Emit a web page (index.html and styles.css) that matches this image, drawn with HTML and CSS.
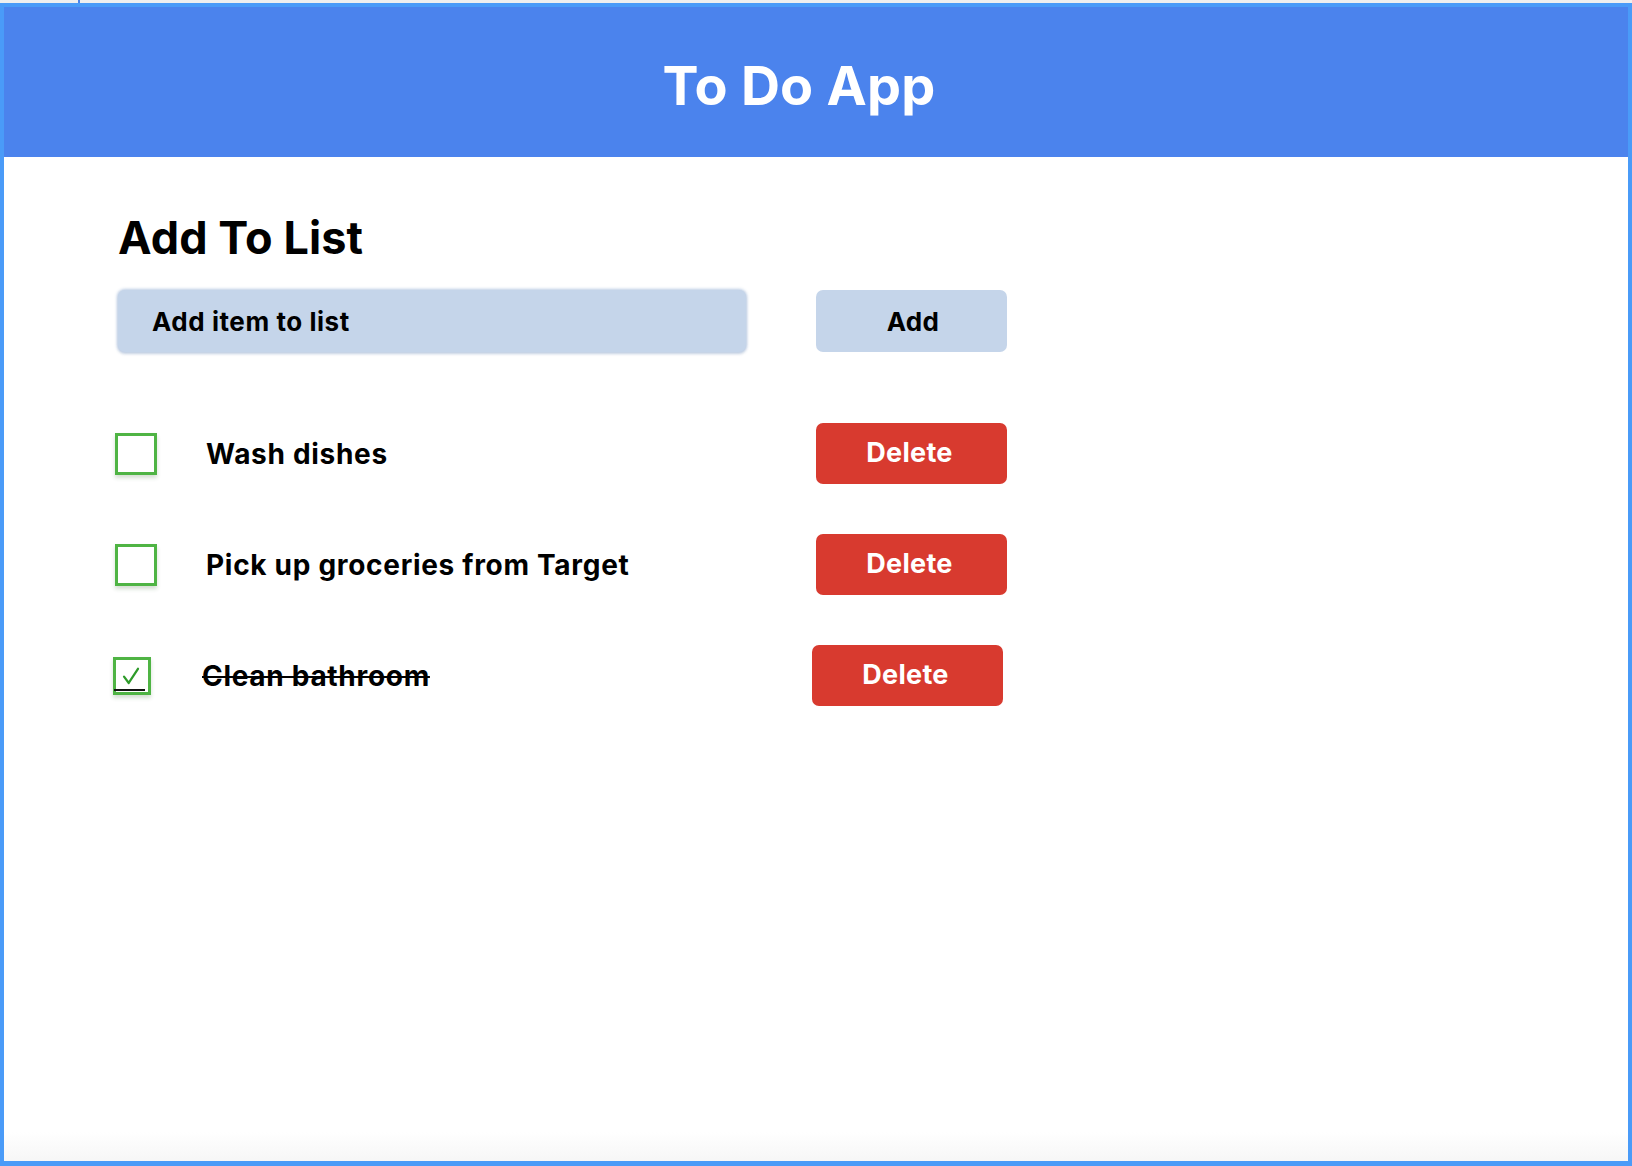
FILE: index.html
```html
<!DOCTYPE html>
<html lang="en">
<head>
<meta charset="utf-8">
<title>To Do App</title>
<link rel="stylesheet" href="styles.css">
</head>
<body>
<div class="topstrip"><span class="topmark"></span></div>
<div class="frame">
  <header class="app-header">
    <h1 class="app-title">To Do App</h1>
  </header>
  <main class="content">
    <h2 class="section-title">Add To List</h2>
    <div class="add-row">
      <div class="add-input">Add item to list</div>
      <button class="btn btn-add">Add</button>
    </div>
    <ul class="todo-list">
      <li class="todo">
        <span class="check"></span>
        <span class="todo-text">Wash dishes</span>
        <button class="btn btn-delete">Delete</button>
      </li>
      <li class="todo">
        <span class="check"></span>
        <span class="todo-text">Pick up groceries from Target</span>
        <button class="btn btn-delete">Delete</button>
      </li>
      <li class="todo todo-done">
        <span class="check check-on">
          <svg class="tick" viewBox="0 0 16 16" width="18" height="18"><path d="M1.8 8.6 L6 14.2 L14.2 1.6" fill="none" stroke="#2e9b2a" stroke-width="2" stroke-linecap="round" stroke-linejoin="round"/></svg>
          <span class="check-line"></span>
        </span>
        <span class="todo-text">Clean bathroom</span>
        <button class="btn btn-delete">Delete</button>
      </li>
    </ul>
  </main>
</div>
</body>
</html>
```

FILE: styles.css
```css
* { box-sizing: border-box; }
html, body { margin: 0; padding: 0; }
body {
  background: #efefef;
  font-family: Inter, "Noto Sans", "Liberation Sans", sans-serif;
  color: #000;
}
.topstrip {
  height: 3px;
  display: flex;
}
.topmark {
  width: 2px;
  height: 3px;
  margin-left: 78px;
  background: #4a83ea;
}
.frame {
  height: 1163px;
  border: 4px solid #4a9bf8;
  border-bottom-width: 5px;
  background: linear-gradient(to bottom, #ffffff 0, #ffffff 1125px, #f6f6f6 1155px);
  display: flex;
  flex-direction: column;
}
.app-header {
  height: 150px;
  background: #4b83ed;
  display: flex;
  align-items: center;
  justify-content: center;
  padding: 7px 34px 0 0;
}
.app-title {
  margin: 0;
  color: #fff;
  font-size: 54px;
  font-weight: 700;
  line-height: 1;
  letter-spacing: 0.2px;
}
.content {
  padding: 58px 0 0 114px;
}
.section-title {
  margin: 0;
  font-size: 45px;
  font-weight: 700;
  line-height: 1;
  letter-spacing: 0.1px;
}
.add-row {
  display: flex;
  gap: 70px;
  margin-top: 30px;
}
.add-input {
  width: 628px;
  height: 62px;
  border-radius: 7px;
  background: #c5d5ea;
  box-shadow: 0 0 3px 1px rgba(180, 198, 225, 0.9), 0 2px 3px rgba(120, 140, 170, 0.25);
  display: flex;
  align-items: center;
  padding-left: 34px;
  font-size: 26px;
  font-weight: 700;
  letter-spacing: 0.55px;
}
.btn {
  border: none;
  font-family: inherit;
  font-weight: 700;
  font-size: 26px;
  letter-spacing: 0.3px;
  width: 191px;
  height: 62px;
  padding: 0;
  border-radius: 7px;
  display: flex;
  align-items: center;
  justify-content: center;
}
.btn-add {
  background: #c5d5ea;
  color: #000;
  padding-left: 3px;
}
.btn-delete {
  background: #d83a2f;
  color: #fff;
  height: 61px;
  padding-bottom: 2px;
  font-size: 27px;
  padding-right: 4px;
}
.todo-list {
  list-style: none;
  margin: 71px 0 0 -3px;
  padding: 0;
  display: flex;
  flex-direction: column;
  gap: 50px;
  width: 892px;
}
.todo {
  display: grid;
  grid-template-columns: 42px 1fr 191px;
  column-gap: 49px;
  align-items: center;
}
.todo-done {
  margin-left: -4px;
  margin-right: 4px;
}
.check {
  width: 42px;
  height: 42px;
  border: 3px solid #4fb444;
  background: #fff;
  box-shadow: 0 3px 4px rgba(40, 90, 30, 0.2);
}
.check-on {
  width: 38px;
  height: 38px;
  margin-left: 2px;
  display: flex;
  flex-direction: column;
  align-items: center;
  justify-content: flex-end;
}
.tick {
  flex: none;
  margin-bottom: 4px;
  margin-right: 3px;
}
.check-line {
  align-self: flex-start;
  width: 31px;
  height: 2px;
  margin-left: -2px;
  margin-bottom: 1px;
  background: #111;
}
.todo-text {
  font-size: 28px;
  font-weight: 700;
  letter-spacing: 0.7px;
  white-space: nowrap;
}
.todo-done .todo-text {
  text-decoration: line-through;
  text-decoration-thickness: 2px;
}
```
